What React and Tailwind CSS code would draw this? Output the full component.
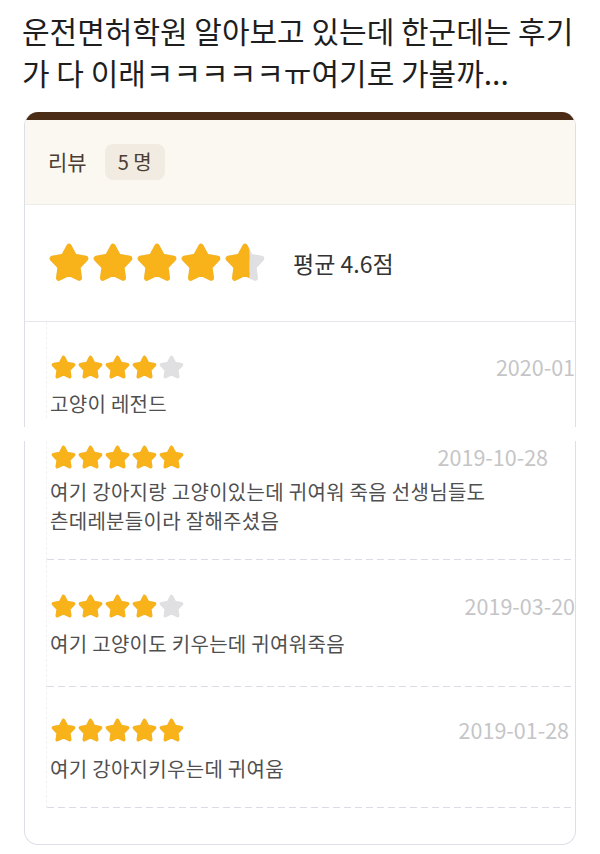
import { useId } from 'react';

const STAR = '12,3 14.94,8.46 21.03,9.56 16.76,14.05 17.58,20.19 12,17.5 6.42,20.19 7.24,14.05 2.97,9.56 9.06,8.46';
const GOLD = '#f9b31a';
const GRAY = '#e0e0e2';

function Star({ fill = 1, size = 27 }) {
  const id = useId().replace(/:/g, '');
  return (
    <svg width={size} height={size} viewBox="0 0 24 24" className="shrink-0">
      <polygon points={STAR} fill={GRAY} stroke={GRAY} strokeWidth="3" strokeLinejoin="round" />
      <clipPath id={id}>
        <rect x="0" y="0" width={24 * fill} height="24" />
      </clipPath>
      <polygon points={STAR} fill={GOLD} stroke={GOLD} strokeWidth="3" strokeLinejoin="round" clipPath={`url(#${id})`} />
    </svg>
  );
}

function Stars({ value, size }) {
  return (
    <div className="flex">
      {[0, 1, 2, 3, 4].map((i) => (
        <Star key={i} size={size} fill={Math.max(0, Math.min(1, value - i))} />
      ))}
    </div>
  );
}

const Dashed = () => (
  <div className="h-[1px] bg-[repeating-linear-gradient(90deg,#d9dce4_0_7px,transparent_7px_11px)]" />
);

function Review({ rating, date, children, pt, gap, pb, datePr, line = true }) {
  return (
    <div className="ml-[21px] border-l border-dashed border-[#f0f1f4]">
      <div className="pl-[3px]" style={{ paddingTop: pt, paddingBottom: pb }}>
        <div className="flex items-center justify-between h-[24px]">
          <Stars value={rating} size={27} />
          <span className="text-[21.5px] text-[#c5c5c7]" style={{ paddingRight: datePr }}>{date}</span>
        </div>
        <p className="text-[20px] leading-[29px] text-[#4f4f4f] tracking-[0.3px]" style={{ marginTop: gap }}>{children}</p>
      </div>
      {line && <Dashed />}
    </div>
  );
}

export default function App() {
  return (
    <div className="w-[600px] h-[854px] bg-white overflow-hidden font-['Noto_Sans_CJK_KR','Noto_Sans',sans-serif]">
      <p className="pl-[22px] pt-[9px] text-[30px] leading-[42px] text-[#1e1e1e]">
        운전면허학원 알아보고 있는데 한군데는 후기
        <br />
        가 다 이래ㅋㅋㅋㅋㅋㅠ여기로 가볼까...
      </p>

      <div className="mx-[24px] mt-[19px] rounded-t-[14px] overflow-hidden border-x border-[#dcdfe7]">
        <div className="h-[8px] bg-[#4a2c17]" />
        <div className="h-[85px] bg-[#fbf8f2] flex items-center pl-[23px] gap-[18px] border-b border-[#efebe5]">
          <span className="text-[21px] text-[#4b3d33]">리뷰</span>
          <span className="h-[36px] px-[13px] rounded-[8px] bg-[#f2ebe1] flex items-center text-[20px] text-[#4b3d33]">5 명</span>
        </div>
        <div className="h-[117px] flex items-center pl-[22px] gap-[26px] border-b border-[#e4e6ec]">
          <Stars value={4.6} size={44} />
          <span className="text-[23px] text-[#333]">평균 4.6점</span>
        </div>
        <div className="h-[105px] overflow-hidden">
          <Review rating={4} date="2020-01" pt={33} gap={10} pb={0} datePr={0} line={false}>
            고양이 레전드
          </Review>
        </div>
      </div>

      <div className="mx-[24px] mt-[14px] rounded-b-[14px] border-x border-b border-[#dcdfe7] pb-[36px]">
        <Review rating={5} date="2019-10-28" pt={4} gap={8} pb={24} datePr={27}>
          여기 강아지랑 고양이있는데 귀여워 죽음 선생님들도
          <br />
          츤데레분들이라 잘해주셨음
        </Review>
        <Review rating={4} date="2019-03-20" pt={34} gap={11} pb={28} datePr={0}>
          여기 고양이도 키우는데 귀여워죽음
        </Review>
        <Review rating={5} date="2019-01-28" pt={31} gap={12} pb={24} datePr={6}>
          여기 강아지키우는데 귀여움
        </Review>
      </div>
    </div>
  );
}
